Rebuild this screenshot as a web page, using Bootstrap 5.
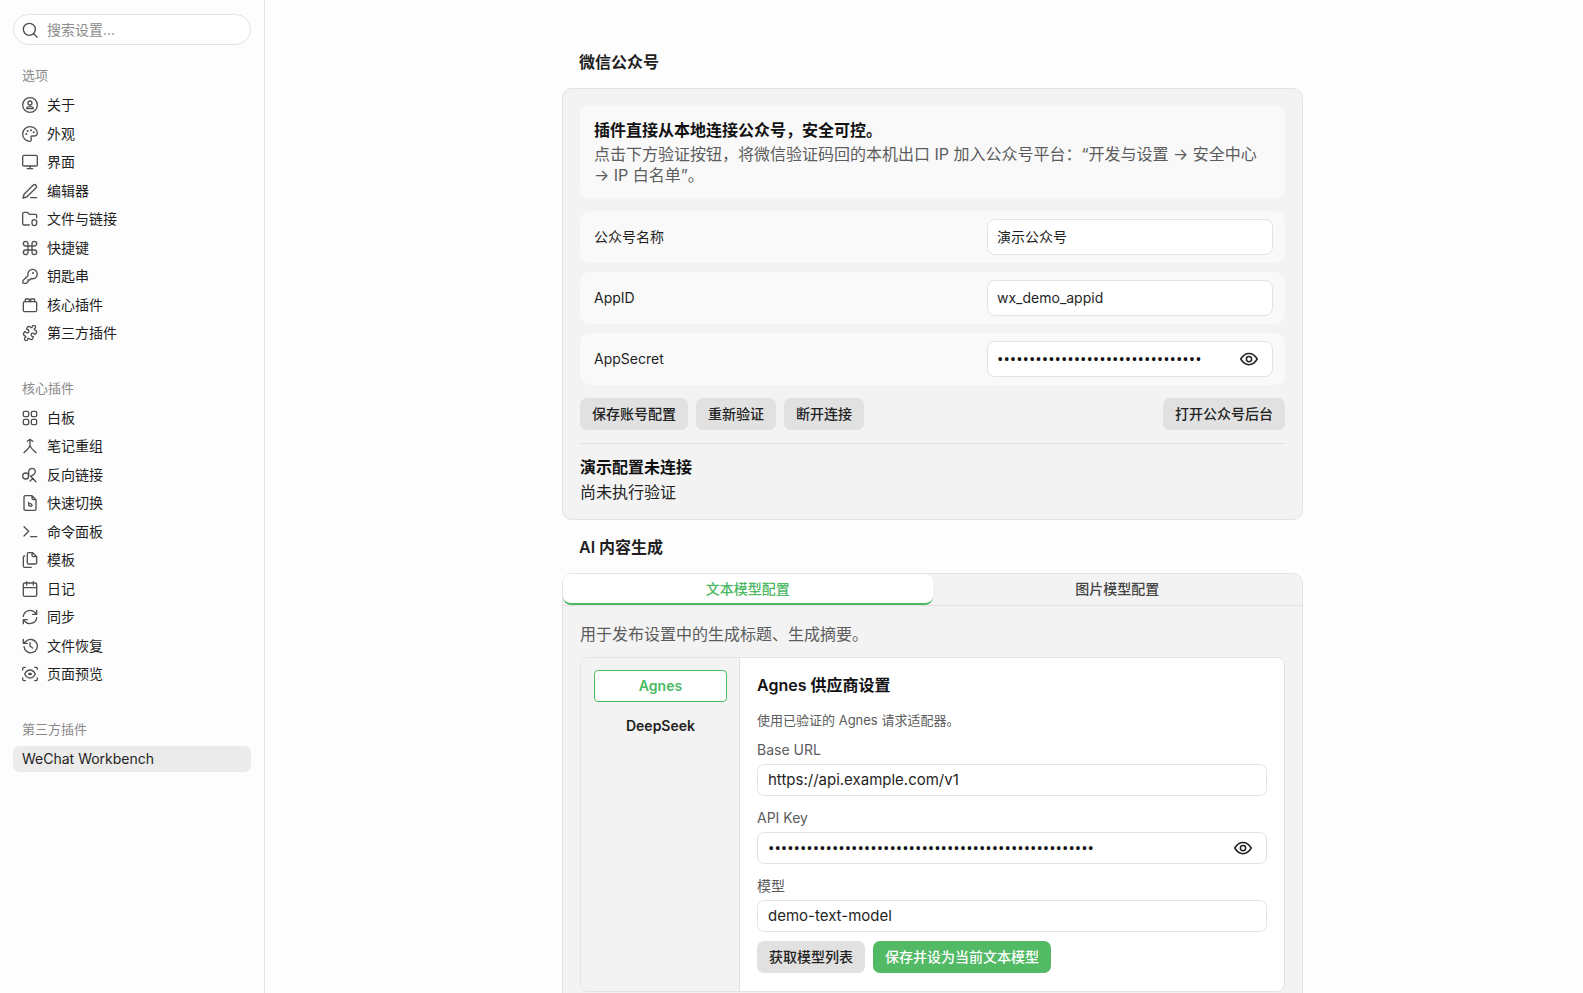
<!DOCTYPE html>
<html lang="zh-CN">
<head>
<meta charset="utf-8">
<meta name="viewport" content="width=device-width, initial-scale=1">
<title>WeChat Workbench</title>
<link href="https://cdn.jsdelivr.net/npm/bootstrap@5.3.0/dist/css/bootstrap.min.css" rel="stylesheet">
<style>
:root{--line:#e3e3e3;--panel:#f3f3f3;--green:#4cb963;--ink:#1f1f1f;--soft:#5c5c5c}
body{font-family:Inter,"Noto Sans CJK SC",sans-serif;font-size:14px;line-height:20px;color:var(--ink);background:#fdfdfd}
.ico{width:16px;height:16px;flex:none;fill:none;stroke:#505050;stroke-width:2;stroke-linecap:round;stroke-linejoin:round}
.scroller{overflow-y:auto;scrollbar-width:none}
.scroller::-webkit-scrollbar{display:none}

/* sidebar */
.side{width:265px;flex:none;padding:14px 13px;border-right:1px solid var(--line)}
.search-box{height:31px;padding:0 8px;gap:9px;border:1px solid var(--line);border-radius:16px;background:#fff;margin-bottom:20px}
.search-box input{border:0;outline:0;background:none;width:100%;padding:0}
.search-box input::placeholder{color:#8c8c8c;opacity:1}
.group-name{font-size:13px;line-height:20px;font-weight:400;color:#8a8a8a;margin:0 0 7px 9px}
.side-group{margin-bottom:32px}
.side-list{display:flex;flex-direction:column;justify-content:space-between}
.list-options{height:254px}
.list-core{height:282px}
.side-link{height:26px;padding:0 9px;gap:9px;border-radius:7px;color:var(--ink);text-decoration:none}
.side-link.active{background:#ebebeb}

/* settings column */
.main-pane{padding:50px 0 24px 17px}
.settings{max-width:741px}
.section-title{font-size:16px;line-height:24px;font-weight:600;margin:0 0 14px 17px}
.panel-box{border:1px solid var(--line);border-radius:10px;background:var(--panel)}
.account{padding:17px 17px 14px;margin-bottom:15px}
.notice{background:#f9f9f9;border-radius:8px;padding:12px 14px;font-size:16px;line-height:21px;color:var(--soft);margin-bottom:13px}
.notice strong{display:block;font-weight:600;line-height:24px;margin-bottom:2px;color:#111}
.field-row{background:#f9f9f9;border-radius:10px;min-height:52px;padding:0 12px 0 14px}
.field-list{display:grid;gap:9px;margin-bottom:13px}
.box{display:flex;align-items:center;height:36px;border:1px solid var(--line);border-radius:8px;background:#fff;padding:0 9px}
.box input{flex:1;min-width:0;border:0;outline:0;background:none;padding:0;color:var(--ink)}
.box input[type=password]{font-family:"Open Sans",sans-serif;font-size:17px;line-height:20px;color:#111}
.field-row .box{width:286px}
.eye-btn{border:0;background:none;padding:0;width:18px;height:18px;margin-right:5px;display:flex}
.eye-btn .ico{width:18px;height:18px;stroke:#222}
.act{--bs-btn-bg:#e1e1e1;--bs-btn-color:#222;--bs-btn-hover-bg:#d6d6d6;--bs-btn-border-color:transparent;--bs-btn-border-width:0;font-size:14px;line-height:20px;font-weight:500;height:32px;padding:0 12px;border-radius:7px}
.act-green{--bs-btn-bg:#52b965;--bs-btn-color:#fff;--bs-btn-hover-bg:#46a859;--bs-btn-hover-color:#fff}
.status{border-top:1px solid #e2e2e2;margin-top:13px;padding-top:11px;font-size:16px;line-height:25px}
.status strong{font-weight:600;color:#111}

/* model tabs */
.tabs{display:flex;height:32px;border-bottom:1px solid var(--line)}
.tab-btn{flex:1;border:0;border-bottom:2px solid transparent;background:none;font-weight:500;line-height:20px;padding:0;height:31px;color:#444;border-radius:8px}
.tab-btn.active{background:#fff;color:var(--green);border-color:var(--green)}
.model-body{padding:16px 17px}
.model-lead{font-size:16px;line-height:24px;color:var(--soft);margin-bottom:11px}
.provider{border:1px solid var(--line);border-radius:8px;background:#fff;overflow:hidden}
.provider-list{width:159px;flex:none;background:var(--panel);border-right:1px solid var(--line);padding:12px 12px 12px 13px;gap:8px}
.provider-btn{height:32px;border:1px solid transparent;border-radius:4px;background:none;font-weight:600;padding:0;color:var(--ink)}
.provider-btn.active{background:#fff;color:var(--green);border-color:var(--green)}
.provider-form{padding:15px 17px 18px}
.provider-form h3{font-size:16px;line-height:24px;font-weight:600;margin:0 0 13px;color:#111}
.hint{font-size:13px;line-height:20px;color:var(--soft);margin-bottom:10px}
.provider-form label{display:block;color:var(--soft);margin-bottom:4px}
.provider-form .box{height:32px;padding:0 10px;border-radius:7px;margin-bottom:12px;font-size:15px}
.provider-form .eye-btn{margin-right:4px}
.provider-form .box.last-box{margin-bottom:9px}
</style>
</head>
<body>
<div class="d-flex vh-100 overflow-hidden">
<aside class="side scroller">
  <label class="search-box d-flex align-items-center">
    <svg class="ico" viewBox="0 0 24 24"><circle cx="11" cy="11" r="9"/><path d="m22.500 22.500-5-5"/></svg>
    <input type="search" placeholder="搜索设置..." aria-label="搜索设置">
  </label>

  <nav class="side-group">
    <h2 class="group-name">选项</h2>
    <div class="side-list list-options">
      <a href="#" class="side-link d-flex align-items-center"><svg class="ico" viewBox="0 0 24 24"><circle cx="12" cy="12" r="11"/><circle cx="12" cy="9" r="3"/><path d="M7 17.500c0-2 2-3 5-3s5 1 5 3z"/></svg>关于</a>
      <a href="#" class="side-link d-flex align-items-center"><svg class="ico" viewBox="0 0 24 24"><path d="M12 23C6 23 1 18 1 12S6 1 12 1s11 4 11 9.500c0 3-2.500 4.500-5.500 4.500H15c-1.500 0-2 1-1.500 2.500.6 2 1 5.500-1.500 5.500z"/><path d="M6.500 12h.01M8.500 7.500h.01M13.500 6.500h.01M17.500 9.500h.01" stroke-width="3"/></svg>外观</a>
      <a href="#" class="side-link d-flex align-items-center"><svg class="ico" viewBox="0 0 24 24"><rect x="1" y="2" width="22" height="16" rx="2"/><path d="M8 22h8M12 18v4"/></svg>界面</a>
      <a href="#" class="side-link d-flex align-items-center"><svg class="ico" viewBox="0 0 24 24"><path d="M13 22h9M17 3a3 3 0 0 1 4.200 4.200L7 21l-5.500 1.500L3 17z"/></svg>编辑器</a>
      <a href="#" class="side-link d-flex align-items-center"><svg class="ico" viewBox="0 0 24 24"><path d="M11 21H3a2 2 0 0 1-2-2V4a2 2 0 0 1 2-2h5l3 3h9a2 2 0 0 1 2 2v3"/><rect x="15" y="13" width="7" height="9" rx="3.500"/></svg>文件与链接</a>
      <a href="#" class="side-link d-flex align-items-center"><svg class="ico" viewBox="0 0 24 24"><path d="M15 5.500v13a3.500 3.500 0 1 0 3.500-3.500h-13A3.500 3.500 0 1 0 9 18.500v-13A3.500 3.500 0 1 0 5.500 9h13A3.500 3.500 0 1 0 15 5.500"/></svg>快捷键</a>
      <a href="#" class="side-link d-flex align-items-center"><svg class="ico" viewBox="0 0 24 24"><path d="M2 18.500 9.200 11.300a7 7 0 1 1 4.500 4.500L11.500 18H9v2.500L6.500 23H3a2 2 0 0 1-2-2z"/><path d="M16.500 7.500h.01" stroke-width="3"/></svg>钥匙串</a>
      <a href="#" class="side-link d-flex align-items-center"><svg class="ico" viewBox="0 0 24 24"><rect x="2" y="7" width="20" height="15" rx="2"/><path d="M11 7V4a1 1 0 0 0-1-1H6a1 1 0 0 0-1 1v3M19 7V4a1 1 0 0 0-1-1h-4a1 1 0 0 0-1 1v3"/></svg>核心插件</a>
      <a href="#" class="side-link d-flex align-items-center"><svg class="ico" viewBox="0 0 24 24"><path transform="rotate(-12 12 12)" d="M15.390 4.390a1 1 0 0 0 1.680-.474 2.500 2.500 0 1 1 3.014 3.015 1 1 0 0 0-.474 1.680l1.683 1.682a2.414 2.414 0 0 1 0 3.414L19.610 15.390a1 1 0 0 1-1.680-.474 2.500 2.500 0 1 0-3.014 3.015 1 1 0 0 1 .474 1.680l-1.683 1.682a2.414 2.414 0 0 1-3.414 0L8.610 19.610a1 1 0 0 0-1.680.474 2.500 2.500 0 1 1-3.014-3.015 1 1 0 0 0 .474-1.680l-1.683-1.682a2.414 2.414 0 0 1 0-3.414L4.390 8.610a1 1 0 0 1 1.680.474 2.500 2.500 0 1 0 3.014-3.015 1 1 0 0 1-.474-1.680l1.683-1.682a2.414 2.414 0 0 1 3.414 0z"/></svg>第三方插件</a>
    </div>
  </nav>

  <nav class="side-group">
    <h2 class="group-name">核心插件</h2>
    <div class="side-list list-core">
      <a href="#" class="side-link d-flex align-items-center"><svg class="ico" viewBox="0 0 24 24"><rect x="2" y="2" width="8" height="8" rx="2"/><rect x="14" y="2" width="8" height="8" rx="2"/><rect x="2" y="14" width="8" height="8" rx="2"/><rect x="14" y="14" width="8" height="8" rx="2"/></svg>白板</a>
      <a href="#" class="side-link d-flex align-items-center"><svg class="ico" viewBox="0 0 24 24"><path d="m8 5 4-3 4 3M12 2v8c0 5-6 8-9 12M12 11c1 5 5 7 9 11"/></svg>笔记重组</a>
      <a href="#" class="side-link d-flex align-items-center"><svg class="ico" viewBox="0 0 24 24"><circle cx="5.500" cy="13.500" r="4.500"/><path d="M10 13V7a5 5 0 1 1 8 4l-5 3M21 22l-7-7M12 21l5-4"/></svg>反向链接</a>
      <a href="#" class="side-link d-flex align-items-center"><svg class="ico" viewBox="0 0 24 24"><path d="M15 1H5a2 2 0 0 0-2 2v18a2 2 0 0 0 2 2h14a2 2 0 0 0 2-2V7zM15 1v4a2 2 0 0 0 2 2h4"/><path d="M10 11v4a3 3 0 0 0 5 1c0-2-1-3-3-3"/></svg>快速切换</a>
      <a href="#" class="side-link d-flex align-items-center"><svg class="ico" viewBox="0 0 24 24"><path d="m3 18 7-7-7-7M13 19h9"/></svg>命令面板</a>
      <a href="#" class="side-link d-flex align-items-center"><svg class="ico" viewBox="0 0 24 24"><path d="M16 1h-6a2 2 0 0 0-2 2v13a2 2 0 0 0 2 2h10a2 2 0 0 0 2-2V7zM15 1v4a2 2 0 0 0 2 2h5M4 6a2 2 0 0 0-2 2v13a2 2 0 0 0 2 2h10"/></svg>模板</a>
      <a href="#" class="side-link d-flex align-items-center"><svg class="ico" viewBox="0 0 24 24"><rect x="2" y="3" width="20" height="20" rx="2"/><path d="M2 10h20M7 1v5M17 1v5"/></svg>日记</a>
      <a href="#" class="side-link d-flex align-items-center"><svg class="ico" viewBox="0 0 24 24"><path d="M2 11a10 10 0 0 1 17-6l3 3M22 2v6h-6M22 13a10 10 0 0 1-17 6l-3-3M8 16H2v6"/></svg>同步</a>
      <a href="#" class="side-link d-flex align-items-center"><svg class="ico" viewBox="0 0 24 24"><path d="M3 13a10 10 0 1 0 3-8L2 8M2 2v6h6M12 7v5l4 3"/></svg>文件恢复</a>
      <a href="#" class="side-link d-flex align-items-center"><svg class="ico" viewBox="0 0 24 24"><path d="M1 6V4a2 2 0 0 1 2-2h2M19 2h2a2 2 0 0 1 2 2v1M23 18v2a2 2 0 0 1-2 2h-2M5 22H3a2 2 0 0 1-2-2v-2"/><path d="M4 12c2-4 5-6 8-6s6 2 8 6c-2 4-5 6-8 6s-6-2-8-6z"/><ellipse cx="12" cy="12" rx="2" ry="1"/></svg>页面预览</a>
    </div>
  </nav>

  <nav class="side-group">
    <h2 class="group-name">第三方插件</h2>
    <a href="#" class="side-link active d-flex align-items-center" aria-current="page">WeChat Workbench</a>
  </nav>
</aside>

<main class="main-pane scroller flex-grow-1">
  <div class="settings mx-auto">
    <h2 class="section-title">微信公众号</h2>
    <section class="panel-box account">
      <div class="notice"><strong>插件直接从本地连接公众号，安全可控。</strong>点击下方验证按钮，将微信验证码回的本机出口 IP 加入公众号平台：“开发与设置 → 安全中心 → IP 白名单”。</div>
      <div class="field-list">
        <div class="field-row d-flex align-items-center justify-content-between">
          <label for="acc-name">公众号名称</label>
          <div class="box"><input id="acc-name" type="text" value="演示公众号"></div>
        </div>
        <div class="field-row d-flex align-items-center justify-content-between">
          <label for="acc-id">AppID</label>
          <div class="box"><input id="acc-id" type="text" value="wx_demo_appid"></div>
        </div>
        <div class="field-row d-flex align-items-center justify-content-between">
          <label for="acc-secret">AppSecret</label>
          <div class="box"><input id="acc-secret" type="password" value="demosecretdemosecretdemosecret12">
            <button type="button" class="eye-btn" aria-label="显示 AppSecret"><svg class="ico" viewBox="0 0 24 24"><path d="M1 12c3-5 7-7.500 11-7.500S20 7 23 12c-3 5-7 7.500-11 7.500S4 17 1 12z"/><circle cx="12" cy="12" r="3.500"/></svg></button>
          </div>
        </div>
      </div>
      <div class="d-flex gap-2">
        <button type="button" class="btn act">保存账号配置</button>
        <button type="button" class="btn act">重新验证</button>
        <button type="button" class="btn act">断开连接</button>
        <button type="button" class="btn act ms-auto">打开公众号后台</button>
      </div>
      <div class="status"><strong>演示配置未连接</strong><div>尚未执行验证</div></div>
    </section>

    <h2 class="section-title">AI 内容生成</h2>
    <section class="panel-box">
      <div class="tabs" role="tablist">
        <button type="button" class="tab-btn active" role="tab" aria-selected="true">文本模型配置</button>
        <button type="button" class="tab-btn" role="tab" aria-selected="false">图片模型配置</button>
      </div>
      <div class="model-body">
        <p class="model-lead">用于发布设置中的生成标题、生成摘要。</p>
        <div class="provider d-flex">
          <div class="provider-list d-flex flex-column">
            <button type="button" class="provider-btn active">Agnes</button>
            <button type="button" class="provider-btn">DeepSeek</button>
          </div>
          <form class="provider-form flex-grow-1">
            <h3>Agnes 供应商设置</h3>
            <p class="hint">使用已验证的 Agnes 请求适配器。</p>
            <label for="base-url">Base URL</label>
            <div class="box"><input id="base-url" type="text" value="https://api.example.com/v1"></div>
            <label for="api-key">API Key</label>
            <div class="box"><input id="api-key" type="password" value="demokeydemokeydemokeydemokeydemokeydemokeydemokey12">
              <button type="button" class="eye-btn" aria-label="显示 API Key"><svg class="ico" viewBox="0 0 24 24"><path d="M1 12c3-5 7-7.500 11-7.500S20 7 23 12c-3 5-7 7.500-11 7.500S4 17 1 12z"/><circle cx="12" cy="12" r="3.500"/></svg></button>
            </div>
            <label for="model">模型</label>
            <div class="box last-box"><input id="model" type="text" value="demo-text-model"></div>
            <div class="d-flex gap-2">
              <button type="button" class="btn act">获取模型列表</button>
              <button type="button" class="btn act act-green">保存并设为当前文本模型</button>
            </div>
          </form>
        </div>
      </div>
    </section>
  </div>
</main>
</div>
<script src="https://cdn.jsdelivr.net/npm/bootstrap@5.3.0/dist/js/bootstrap.bundle.min.js"></script>
</body>
</html>
